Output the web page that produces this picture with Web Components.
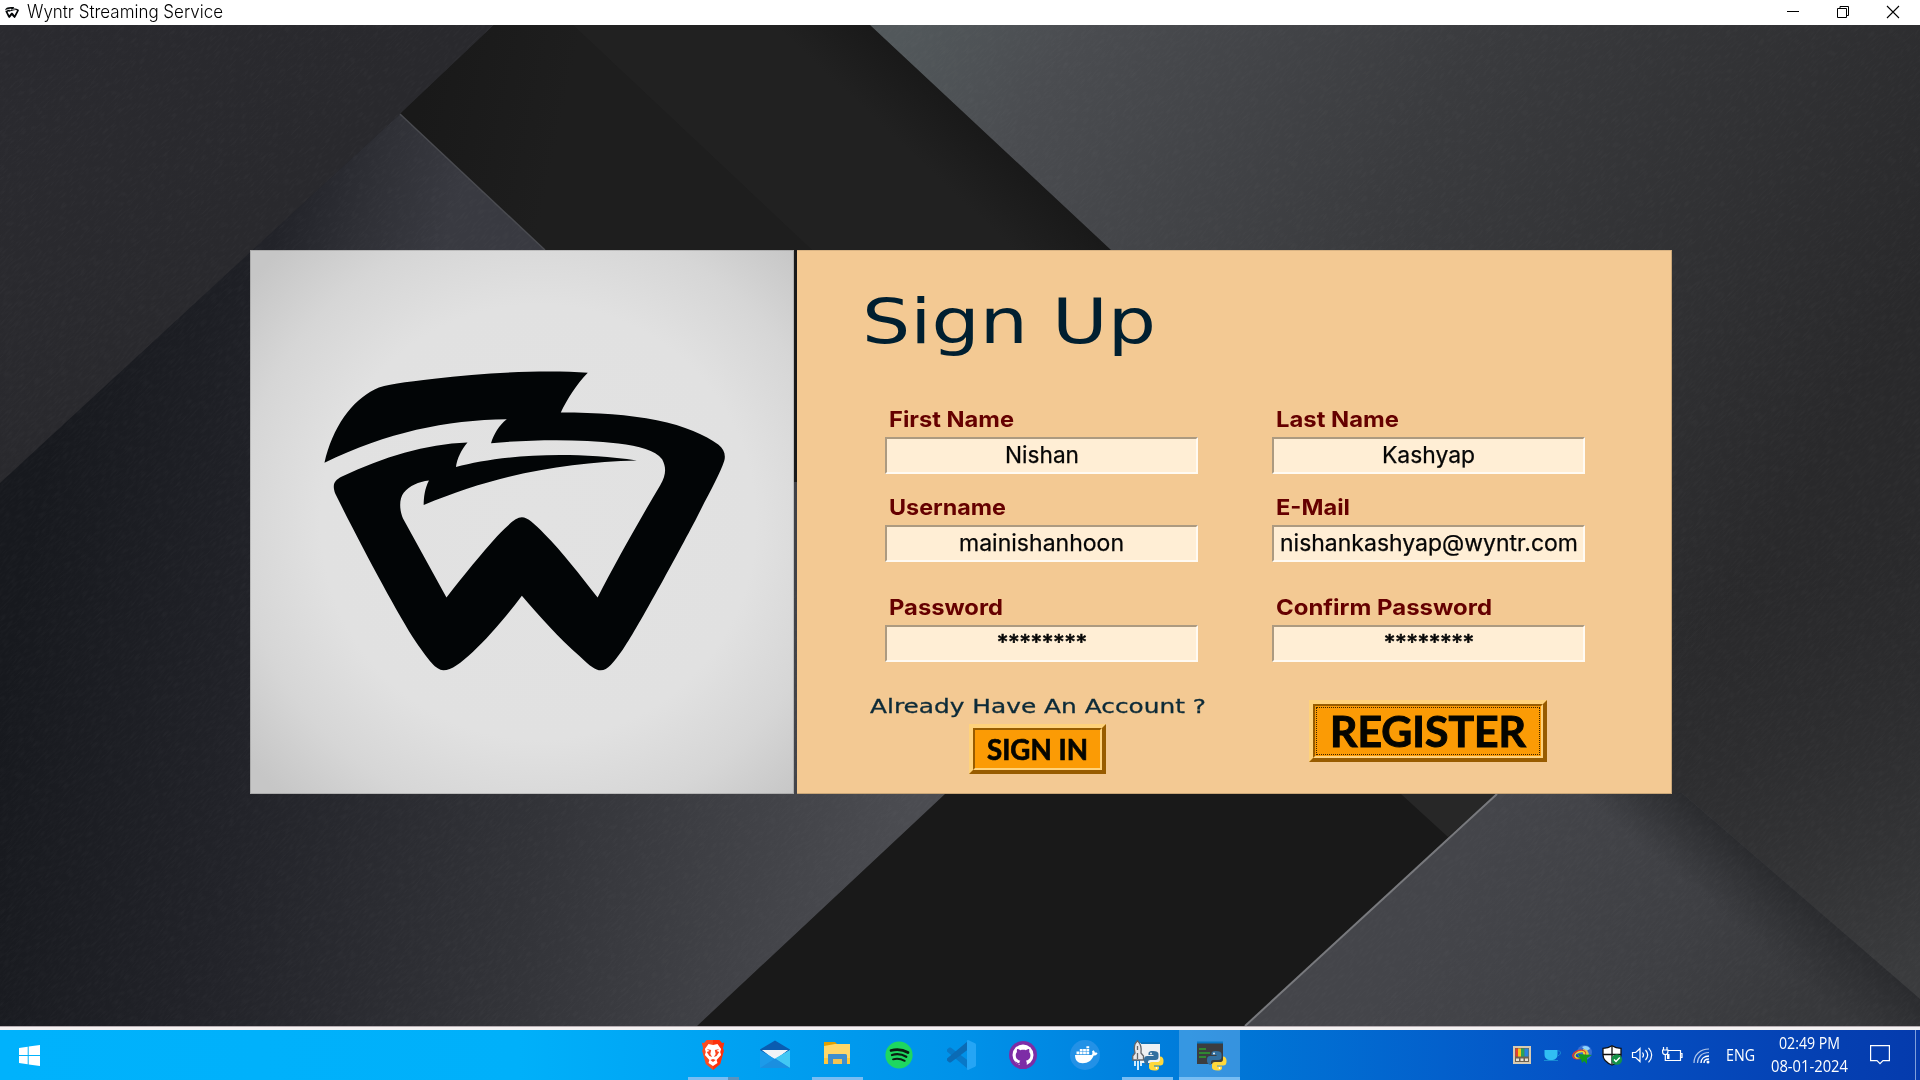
<!DOCTYPE html>
<html lang="en">
<head>
<meta charset="utf-8">
<title>Wyntr Streaming Service</title>
<style>
html,body{margin:0;height:100%;overflow:hidden;background:#1d1d1f}
body{font-family:Inter,"Liberation Sans",sans-serif}
</style>
</head>
<body>
<wyntr-app></wyntr-app>
<script>
const define = (name, html, ready) => customElements.define(name, class extends HTMLElement {
  constructor() { super(); this.attachShadow({ mode: 'open' }).innerHTML = html; }
  connectedCallback() { if (ready) ready(this, this.shadowRoot); }
});

/* Text stretched horizontally to a given width */
define('fit-text', `<style>
:host{display:block;white-space:pre}
span{display:inline-block;transform-origin:0 50%}
</style><span><slot></slot></span>`, (el, root) => {
  const w = +el.getAttribute('width'), s = root.querySelector('span');
  el.style.width = w + 'px';
  requestAnimationFrame(() => { if (s.offsetWidth) s.style.transform = `scaleX(${w / s.getBoundingClientRect().width})`; });
});

define('wyntr-mark', `<style>:host{display:block}svg{display:block;width:100%;height:100%}</style>
<svg viewBox="205 340 1155 862" preserveAspectRatio="none"><path fill="#020506" d="M212 607C235 505 290 430 355 398C385 384 440 378 525 368C670 350 850 341 963 351C930 385 905 425 886 464C990 464 1080 470 1160 486C1240 502 1298 528 1335 555C1352 568 1357 585 1352 602C1340 640 1306 698 1270 770C1205 892 1100 1085 1063 1138C1035 1176 1020 1197 1000 1197C985 1197 970 1186 940 1157C880 1105 825 1043 775 985C730 1045 680 1103 635 1145C600 1177 575 1197 551 1197C530 1197 510 1170 473 1117C420 1035 320 850 243 695C234 670 238 658 262 646C380 590 500 553 620 549C602 570 590 595 587 619C700 588 890 570 1103 600C900 605 700 640 495 727C495 705 498 680 510 657C480 660 455 672 438 692C425 708 425 740 436 765L560 990C610 925 660 865 705 815C740 780 758 762 775 762C792 762 810 780 840 810C890 860 940 925 991 990C1040 895 1110 770 1170 670C1187 640 1187 620 1175 597C1155 570 1110 560 1050 552C930 538 800 541 687 551C695 525 710 500 732 483C560 485 390 520 212 607Z"/></svg>`);

define('title-bar', `<style>
:host{display:flex;height:25px;background:#fff;align-items:center;color:#000;box-sizing:border-box;padding:0 20px 0 5px}
wyntr-mark{width:14px;height:11px;margin-right:8px}
fit-text{font:300 18px/22px Inter,sans-serif;flex:1;margin-top:-2px}
svg{display:block}
.c{display:flex;gap:36px;margin:-1px 0 0 auto}
</style><wyntr-mark></wyntr-mark><fit-text width="196">Wyntr Streaming Service</fit-text>
<div class="c">
<svg width="14" height="14" fill="none" stroke="#000"><path d="M1 6.500h12"/></svg>
<svg width="14" height="14" fill="none" stroke="#000"><path d="M1.500 3.500h9v9h-9zM4 3.500v-2h8.500v9h-2"/></svg>
<svg width="14" height="14" fill="none" stroke="#000" stroke-width="1.100"><path d="M1 1l12 12M13 1L1 13"/></svg>
</div>`);

/* Folded dark metal sheets */
define('metal-backdrop', `<style>:host{display:block}svg{display:block}</style>
<svg width="1920" height="1001" viewBox="0 25 1920 1001">
<defs>
<linearGradient id="l" gradientUnits="userSpaceOnUse" x1="0" y1="700" x2="900" y2="860"><stop offset="0" stop-color="#17191e"/><stop offset=".28" stop-color="#222329"/><stop offset=".6" stop-color="#323338"/><stop offset="1" stop-color="#4b4c51"/></linearGradient>
<linearGradient id="lt" gradientUnits="userSpaceOnUse" x1="280" y1="215" x2="440" y2="260"><stop offset="0" stop-color="#222329"/><stop offset=".5" stop-color="#2f3036"/><stop offset="1" stop-color="#393a41"/></linearGradient>
<linearGradient id="ll" gradientUnits="userSpaceOnUse" x1="0" y1="40" x2="250" y2="260"><stop offset="0" stop-color="#2a2a2f"/><stop offset="1" stop-color="#29292d"/></linearGradient>
<linearGradient id="r" gradientUnits="userSpaceOnUse" x1="900" y1="40" x2="1770" y2="540"><stop offset="0" stop-color="#52585b"/><stop offset=".15" stop-color="#4a4c50"/><stop offset=".5" stop-color="#3a3b3e"/><stop offset="1" stop-color="#29292b"/></linearGradient>
<linearGradient id="r2" gradientUnits="userSpaceOnUse" x1="1760" y1="520" x2="1880" y2="980"><stop offset="0" stop-color="#29292b" stop-opacity="0"/><stop offset="1" stop-color="#3a3b3d"/></linearGradient>
<linearGradient id="m" gradientUnits="userSpaceOnUse" x1="420" y1="100" x2="560" y2="130"><stop offset="0" stop-color="#191919"/><stop offset="1" stop-color="#1e1e1e"/></linearGradient>
<linearGradient id="s" gradientUnits="userSpaceOnUse" x1="990" y1="137" x2="945" y2="185"><stop offset="0" stop-color="#191919"/><stop offset="1" stop-color="#212121"/></linearGradient>
<linearGradient id="b" gradientUnits="userSpaceOnUse" x1="1480" y1="830" x2="1800" y2="1020"><stop offset="0" stop-color="#44454a"/><stop offset=".6" stop-color="#3e3f43"/><stop offset="1" stop-color="#37383b"/></linearGradient>
<linearGradient id="bs" gradientUnits="userSpaceOnUse" x1="1800" y1="895" x2="1757" y2="945"><stop offset="0" stop-color="#2a2b2e"/><stop offset=".45" stop-color="#2c2d30" stop-opacity=".6"/><stop offset="1" stop-color="#2c2d30" stop-opacity="0"/></linearGradient>
<filter id="g" x="0" y="0" width="100%" height="100%"><feTurbulence type="fractalNoise" baseFrequency=".12 .6" numOctaves="2" seed="4"/><feColorMatrix values="0 0 0 0 1  0 0 0 0 1  0 0 0 0 1  .6 0 0 0 -.24"/></filter>
<clipPath id="c"><path d="M870 25H1920V1026H1245L1497 794 1111 250zM0 25H494L400 114 545 250 945 794 697 1026H0z"/></clipPath>
</defs>
<rect y="25" width="1920" height="1001" fill="#191919"/>
<path d="M0 200L400 114 545 250 790 482H840L945 794 697 1026H0z" fill="url(#l)"/>
<path d="M400 114L545 250H253z" fill="url(#lt)"/>
<path d="M0 25H494L400 114 0 483z" fill="url(#ll)"/>
<path d="M494 25H573L812 250H545L400 114z" fill="url(#m)"/>
<path d="M573 25H870L1111 250H812z" fill="url(#s)"/>
<path d="M400 114L545 250" stroke="#4a4b50" stroke-width="1.500"/>
<path d="M870 25H1920V1026H1670L1400 520 1111 250z" fill="url(#r)"/>
<path d="M1660 520H1920V1026H1670z" fill="url(#r2)"/>
<path d="M1401 794H1497L1448 837z" fill="#272727"/>
<path d="M1497 793H1682L1920 999V1026H1245z" fill="url(#b)"/>
<path d="M1497 793H1682L1920 999V1026H1245z" fill="url(#bs)"/>
<path d="M1497 794L1245 1026" stroke="#78797d" stroke-width="2"/>
<g clip-path="url(#c)" opacity=".1"><rect x="-500" y="-600" width="2900" height="2300" filter="url(#g)" transform="rotate(-45 960 540)"/></g>
</svg>`);

define('logo-card', `<style>
:host{display:block;width:544px;height:544px;box-sizing:border-box;padding:119px 67px 122px 72px;
background:radial-gradient(ellipse 375px 375px at 53% 50%,#e2e2e2 0,#e1e1e1 58%,#d6d6d6 80%,#c6c6c6 100%);box-shadow:inset 0 0 0 1px #0002}
wyntr-mark{width:405px;height:303px}
</style><wyntr-mark></wyntr-mark>`);

define('form-field', `<style>
:host{display:block;width:313px}
.l{font:650 22px/28px Inter,sans-serif;color:#650000;padding:1px 0 0 4px;margin-bottom:4px}
.i{height:37px;box-sizing:border-box;background:#ffeed5;border:2px solid;border-color:#ac9a80 #fffaf2 #fffaf2 #ac9a80;display:flex;justify-content:center;font:400 23px/32px Inter,sans-serif;color:#060606;-webkit-text-stroke:.25px #060606}
:host([secret]) .i{line-height:31px;font-size:21px;-webkit-text-stroke:.6px #060606}
</style><div class="l"></div><div class="i"></div>`, (el, r) => {
  const a = n => el.getAttribute(n);
  r.querySelector('.l').innerHTML = `<fit-text width="${a('lw')}">${a('label')}</fit-text>`;
  r.querySelector('.i').innerHTML = `<fit-text width="${a('vw')}">${a('value')}</fit-text>`;
});

define('bevel-button', `<style>
:host{display:block;box-sizing:border-box;border:4px solid;border-color:#ffd27b #985c00 #985c00 #ffd27b}
.a{box-sizing:border-box;height:100%;border:2px solid;border-color:#985c00 #ffd27b #ffd27b #985c00;background:#fb9b05;padding:1px;display:flex}
.b{flex:1;display:flex;align-items:center;justify-content:center;color:#050500}
:host([focused]) .b{outline:1px dotted #3d2500;outline-offset:-1px}
</style><div class="a"><div class="b"><slot></slot></div></div>`);

define('signup-card', `<style>
:host{display:flex;flex-direction:column;width:875px;height:544px;box-sizing:border-box;background:#f3c993;padding:40px 0 0 65px;box-shadow:inset 0 -1px #c9a678,inset -1px 0 #c9a678,inset 0 1px #d8b383}
.h{font:400 63px/64px "DejaVu Sans",sans-serif;color:#001f30}
.f{display:grid;grid-template-columns:313px 313px;grid-template-rows:70px 88px 118px;column-gap:74px;margin:50px 0 0 23px}
.f>*{align-self:end}
.f>:nth-child(n+5){align-self:start;margin-top:30px}
.x{display:flex;margin-top:20px;justify-content:space-between;padding-right:125px}
.q{font:400 20px/24px "DejaVu Sans",sans-serif;color:#0c2a38;padding-left:8px;-webkit-text-stroke:.3px #0c2a38}
.s{width:137px;height:50px;margin:6px 0 0 107px;font:700 28px/32px Lato,sans-serif;-webkit-text-stroke:.7px #050500}
.r{width:238px;height:62px;font:700 42px/46px Lato,sans-serif;-webkit-text-stroke:1px #050500}
.left{margin-top:-6px}
</style>
<fit-text class="h" width="294">Sign Up</fit-text>
<div class="f">
<form-field label="First Name" lw="125" value="Nishan" vw="74"></form-field>
<form-field label="Last Name" lw="123" value="Kashyap" vw="93"></form-field>
<form-field label="Username" lw="117" value="mainishanhoon" vw="165"></form-field>
<form-field label="E-Mail" lw="74" value="nishankashyap@wyntr.com" vw="298"></form-field>
<form-field secret label="Password" lw="114" value="********" vw="90"></form-field>
<form-field secret label="Confirm Password" lw="216" value="********" vw="90"></form-field>
</div>
<div class="x"><div class="left"><fit-text class="q" width="336">Already Have An Account ?</fit-text><bevel-button class="s"><fit-text width="101">SIGN IN</fit-text></bevel-button></div>
<bevel-button class="r" focused><fit-text width="196">REGISTER</fit-text></bevel-button></div>`);

const PY = `<g transform="translate(12 11)"><path fill="#326f9f" d="M9 0C4 0 4.500 2 4.500 4h5v1H3C0 5 0 8 0 9.500c0 2 1 4.500 4 4.500V11.500C4 9 6 9 7 9h4.500c2 0 3-1 3-3V3c0-2-2-3-5.500-3z"/><path fill="#ffd83b" d="M10.500 19.500c5 0 4.500-2 4.500-4h-5v-1h6.500c3 0 3-3 3-5 0-2-1-4-3.500-4V8.500c0 2-1.500 2.500-3 2.500H8c-2 0-3 1-3 3v2.500c0 2 2 3 5.500 3z"/><circle cx="7" cy="2.500" r=".9" fill="#fff"/><circle cx="12.500" cy="17" r=".9" fill="#fff"/></g>`;
const ICONS = {
brave:`<g transform="translate(1.500 0) scale(.9 1)"><path fill="#fb4b1f" d="M8 0h14l3 3 2.500-.3L26 8l1 3-4 13-8 6-8-6L3 11l1-3-1.500-5.300L5 3z"/><path fill="#ff2000" d="M15 0h7l3 3 2.500-.3L26 8l1 3-4 13-8 6z" opacity=".6"/><path fill="#fff" d="M10 4l5 1 5-1 4 5-1 3 1 3-5 5 1 3-5 3-5-3 1-3-5-5 1-3-1-3z"/><path fill="#fb4320" d="M8 9l5 1-1 4 2 3-3-1-3-4 3-1zM22 9l-5 1 1 4-2 3 3-1 3-4-3-1zM12 20l3-1 3 1-3 2z"/></g>`,
mail:`<path fill="#0a5cb0" d="M0 9.500L15 .5l15 9v5H0z"/><path fill="#f2f4f7" d="M2 10h26L15 20z"/><path fill="#1c9bea" d="M0 10l15 9 15-9V28H0z"/><path fill="#f2f4f7" d="M2.500 10h25L15 18.500z"/><path fill="#42c8f4" d="M30 10L15 18.500 30 28z"/><path fill="#1a8fe0" d="M0 28L15 18.500 30 28z"/>`,
folder:`<path fill="#dfa000" d="M2 2h11l2 2-2 3H2z"/><path fill="#ffd769" d="M2 6l11-2h15v20H2z"/><path fill="#ffc83d" d="M2 18h26v6H2z"/><path fill="#3f8fcf" d="M6.500 14h17a1.500 1.500 0 011.500 1.500V24h-5v-5h-9v5H6V15a1 1 0 01.500-1z"/><path fill="#f3c453" d="M11 19h9v5h-9z"/>`,
spotify:`<circle cx="15" cy="15" r="13.600" fill="#1ed760"/><g fill="none" stroke="#0b1d12" stroke-linecap="round"><path stroke-width="2.700" d="M7 10.500c6-1.500 12-.8 17 2"/><path stroke-width="2.300" d="M8 15c5-1.500 10-.8 14.300 1.700"/><path stroke-width="1.900" d="M9 19.300c4-1 8-.5 11.700 1.500"/></g>`,
code:`<path fill="#0878c8" d="M1 9.500l2-1.700c.7-.5 1.500-.4 2 0L22 20.500V29L1 11.500z"/><path fill="#0b6bb5" d="M1 20.500l2 1.700c.7.500 1.500.4 2 0L22 9.500V1L1 18.500z"/><path fill="#25a5f5" d="M22 0l7 3.300c.6.300 1 1 1 1.700v20c0 .7-.4 1.400-1 1.700L22 30c-1 .3-1-1-1-2V2c0-1 0-2.300 1-2z"/>`,
github:`<circle cx="15" cy="15" r="14" fill="#7d2da6"/><circle cx="15" cy="15" r="10.500" fill="#fff"/><path fill="#7d2da6" d="M11.500 29v-5.200c-3 .7-4-1.300-4.800-2.300 2-.2 2 2 4.800 1.200 0-1 .3-1.500.8-2-5-.8-5.500-6.500-3.300-8.700-.3-1-.2-2.300.2-3 1.300 0 2.300.7 3.100 1.200 2-.5 4-.5 5.600 0 .8-.5 1.800-1.200 3.100-1.200.4.700.5 2 .2 3 2.200 2.200 1.700 7.900-3.300 8.700.6.600.9 1.500.9 2.700V29z"/>`,
docker:`<circle cx="15" cy="15" r="15" fill="#2391e6"/><path fill="#fff" d="M5 15h16c1.500 0 1.800-2 1-3.500l1.300-1.200c1 .7 1.400 1.300 1.500 2.200 1 0 2 0 2.700.7-.6 1.500-1.800 2.300-3.800 2.300-2 5-5.500 7.700-11 7.700-5 0-7.700-3-7.700-8.200z"/><g fill="#fff"><path d="M6.500 11.500h2.800v2.800H6.500zM9.800 11.500h2.800v2.800H9.800zM13.100 11.500h2.800v2.800h-2.800zM16.400 11.500h2.800v2.800h-2.800zM9.800 9h2.800v2H9.800zM13.100 9h2.800v2h-2.800zM16.400 9h2.800v2h-2.800zM16.400 6.300h2.800v2h-2.800z"/></g>`,
rocket:`<path fill="#eef1f4" d="M8 3h20v20H8z"/><path stroke="#0872bd" stroke-width="2" d="M9 3h19"/><path fill="#e8e8ea" stroke="#63666b" stroke-width="1.300" d="M5.500.7C9 4 9.700 8 9 13l2.500 3v4H.7v-4L3 13C1.500 8 2 4 5.500.7zM5.500 6v4M5.500 13v6"/><path fill="none" stroke="#e4f5ff" stroke-width="1.800" d="M3 21v5M6 21v9M9 21v5"/>${PY}`,
term:`<path fill="#3b3d40" d="M2 2h26v22H2z"/><path fill="#0878c5" d="M2 1.500h26v2H2z"/><path fill="none" stroke="#2ea12e" stroke-width="1.300" d="M4 9h7M4 13h11M4 17h7"/>${PY}`
};
define('task-icon', `<style>
:host{display:flex;flex-direction:column;width:62px;height:50px;box-sizing:border-box;align-items:center}
:host([active]){width:61px;margin-left:1px;background:#ffffff36}
.w{height:37px;margin-top:10px}svg{display:block;overflow:visible}
.u{display:flex;width:51px;height:3px}.u i{flex:1;background:#78bdf3}.u b{width:0;background:#5a93be}
:host([multi]) .u b{width:11px}
:host([active]) .u{width:100%}
</style><div class="w"><svg width="30" height="30" viewBox="0 0 30 30"></svg></div><div class="u"></div>`, (el, r) => {
  r.querySelector('svg').innerHTML = ICONS[el.getAttribute('name')];
  if (el.hasAttribute('open')) r.querySelector('.u').innerHTML = '<i></i><b></b>';
});

const TRAY = {
tiles:`<path fill="#d8cbb1" d="M1 1h18v18H1z"/><path fill="#6c6253" d="M3 3h14v14H3z"/><path fill="#e7402d" d="M3.500 3.500h4.300v8H3.500z"/><path fill="#f3c716" d="M6 3.500h3v8H6z"/><path fill="#29a35a" d="M9 3.500h3.500v8H9z"/><path fill="#2684df" d="M12.500 3.500h4v8h-4z"/><path fill="#e8e2d6" d="M4 13.500h3v2.500H4zM8.500 13.500h3v2.500h-3zM13 13.500h3v2.500h-3z"/>`,
cup:`<path fill="#30bff3" d="M2.500 5h13v4c0 4-2 6-6.500 6s-6.500-2-6.500-6z"/><path fill="none" stroke="#178bd5" d="M15.500 6c4-1 4 4 0 5M2 15.500h14"/>`,
globe:`<circle cx="12.500" cy="7.500" r="7.500" fill="#376fd3"/><path fill="#8fd5ff" d="M10 2c3-2 7-1 8 2l-4 2z"/><path fill="#ddc449" d="M11 4l4 1 2 4-3 3-3-3z"/><ellipse cx="7" cy="9.500" rx="6.500" ry="4" fill="none" stroke="#e03b2e" stroke-width="1.500" transform="rotate(-18 7 9)"/><ellipse cx="7.500" cy="10" rx="5" ry="3" fill="none" stroke="#f3d530" stroke-width="1.500" transform="rotate(-18 7 9)"/><path fill="#139a1d" d="M6 9l14 1-5 3v6l-3-3-2 2-1-4-4-1 3-1z"/>`,
shield:`<path fill="#fff" stroke="#111" stroke-width="1.300" d="M10 .8c3 2 6 2.500 9 2.500V10c0 5-4 8-9 10-5-2-9-5-9-10V3.300c3 0 6-.5 9-2.500z"/><path stroke="#111" stroke-width="1.300" d="M10 1v18M1 9.500h18"/><circle cx="14.800" cy="14.500" r="5.300" fill="#149247"/><path fill="none" stroke="#fff" stroke-width="1.400" d="M12 14.500l2 2 3.800-4"/>`,
sound:`<path fill="none" stroke="#fff" stroke-width="1.200" d="M.5 7.500h3.200L8 3.500v13l-4.300-4H.5zM10.500 7.500c1.200 1.500 1.200 3.500 0 5M13.500 5c2.600 3 2.600 7 0 10M16.500 2.800c4 4.500 4 10 0 14.500"/>`,
battery:`<path fill="none" stroke="#fff" stroke-width="1.200" d="M6 5.500h12.500v10H5M18.500 8.500H20v4h-1.500M1.500 2v3M5 2v3M.6 5h5.300v2c0 1.500-1 2.500-2.600 2.500S.6 8.500.6 7zM3.300 9.500v6H6"/><path fill="#fff" d="M5 9h2.500v5H5z"/>`,
wifi:`<path fill="none" stroke="#ffffffb0" stroke-width="1.200" d="M2 18C2 10 8 4 17 4M5.500 18C5.500 12 10 7.500 17 7.500"/><path fill="none" stroke="#fff" stroke-width="1.400" d="M9 18c0-4 3-7 8-7M12 18c0-2.500 2-4 5-4"/><circle cx="16" cy="17" r="1.500" fill="#fff"/>`
};
define('tray-icon', `<style>:host{display:block;width:20px;height:20px}svg{display:block;overflow:visible}</style><svg width="20" height="20" viewBox="0 0 20 20"></svg>`,
 (el, r) => { r.querySelector('svg').innerHTML = TRAY[el.getAttribute('name')]; });

define('task-bar', `<style>
:host{display:flex;height:50px;color:#fff;font-family:"Open Sans",sans-serif;background:linear-gradient(90deg,#00b2fc 0,#00b0fa 27%,#0092e9 50%,#0075d6 65%,#0552c5 82%,#0540b2 95%,#053bad 100%)}
.st{padding:15px 0 0 19px;width:682px;box-sizing:border-box;flex:none}
svg{display:block}
.t{display:flex;flex:none}
.y{display:flex;margin-left:272px;align-items:center;gap:10px;flex:none}
.e{font-size:15.500px;line-height:20px;margin-left:4px}
.k{display:flex;flex-direction:column;align-items:center;font-size:15.500px;line-height:23px;width:76px;margin-left:6px;padding-bottom:1px}
.n{margin-left:13px}
.d{width:1px;background:#7f9fdc;height:50px;margin-left:15px}
</style>
<div class="st"><svg width="21" height="21" fill="#fff"><path d="M0 3l8.700-1.300V10H0zM9.700 1.500L21 0v10H9.700zM0 11h8.700v8.300L0 18zM9.700 11H21v10L9.700 19.500z"/></svg></div>
<div class="t"><task-icon name="brave" open multi></task-icon><task-icon name="mail"></task-icon><task-icon name="folder" open></task-icon><task-icon name="spotify"></task-icon><task-icon name="code"></task-icon><task-icon name="github"></task-icon><task-icon name="docker"></task-icon><task-icon name="rocket" open></task-icon><task-icon name="term" open active></task-icon></div>
<div class="y"><tray-icon name="tiles"></tray-icon><tray-icon name="cup"></tray-icon><tray-icon name="globe"></tray-icon><tray-icon name="shield"></tray-icon><tray-icon name="sound"></tray-icon><tray-icon name="battery"></tray-icon><tray-icon name="wifi"></tray-icon>
<fit-text class="e" width="29">ENG</fit-text>
<div class="k"><fit-text width="61">02:49 PM</fit-text><fit-text width="77">08-01-2024</fit-text></div>
<svg class="n" width="20" height="20" fill="none" stroke="#fff" stroke-width="1.200"><path d="M.6.6h18.800v15h-6.400l-3 3-3-3H.6z"/></svg><div class="d"></div></div>`);

define('wyntr-app', `<style>
:host{display:flex;flex-direction:column;width:1920px;height:1080px;overflow:hidden}
.stage{display:grid;height:1001px;flex:none}
.stage>*{grid-area:1/1}
.cards{display:flex;gap:3px;padding:225px 0 0 250px;align-items:flex-start}
.edge{height:4px;flex:none;box-sizing:border-box;background:#f3f1f2;border-top:1px solid #b5adb2}
title-bar,task-bar{flex:none}
</style>
<title-bar></title-bar>
<div class="stage"><metal-backdrop></metal-backdrop><div class="cards"><logo-card></logo-card><signup-card></signup-card></div></div>
<div class="edge"></div>
<task-bar></task-bar>`);
</script>
</body>
</html>
